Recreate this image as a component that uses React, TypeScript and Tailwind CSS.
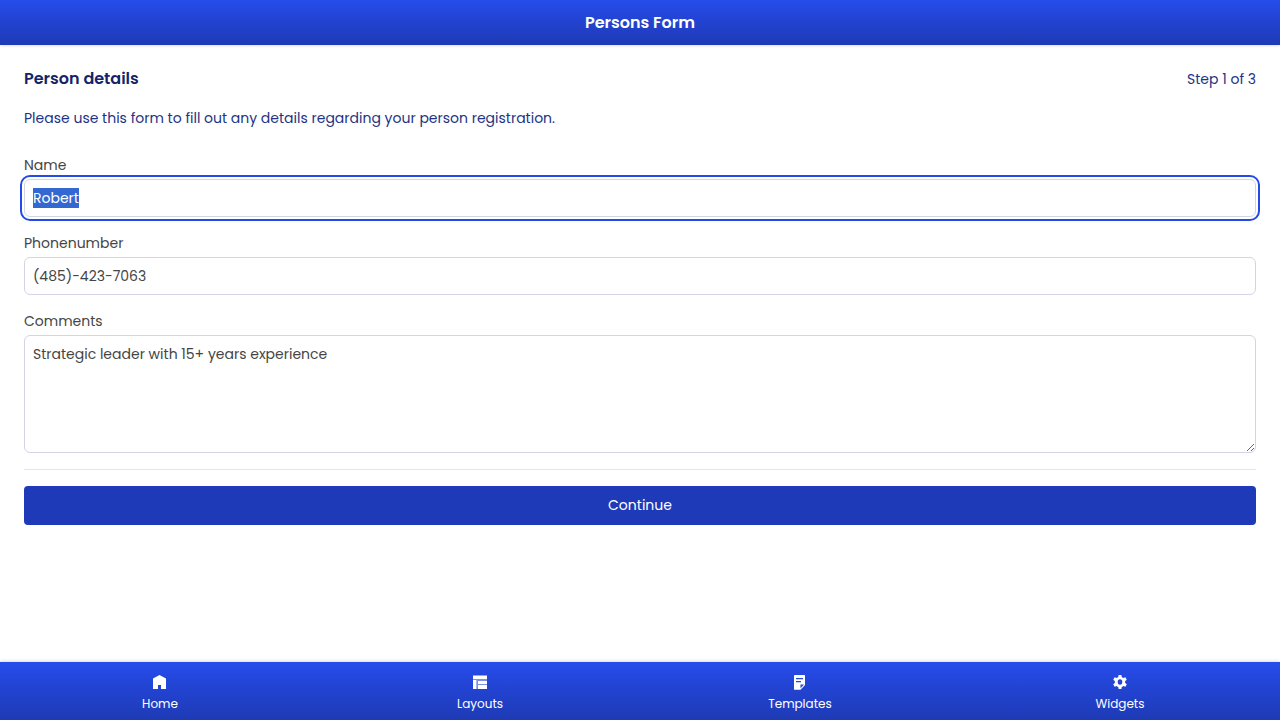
import { useEffect, useRef } from "react";

const tabs = [
  {
    label: "Home",
    icon: <path d="M7.500 1 14 4.500V15H9v-4H6v4H1V4.500Z" />,
  },
  {
    label: "Layouts",
    icon: (
      <>
        <path d="M1 1.500h14v3.500H1zM1 6h3.500v9H1zM6 7h9v3H6zM6 11h9v4H6z" />
        <path d="M1 5h14v1H1zM4.500 6H6v9H4.500zM6 6h9v1H6zM6 10h9v1H6z" fillOpacity="0.400" />
      </>
    ),
  },
  {
    label: "Templates",
    icon: (
      <path
        fillRule="evenodd"
        d="M3 1h9.500q.5 0 .5.500V11l-4.500 4.800H2.500q-.5 0-.5-.500V1.500Q2 1 3 1ZM4 4v1.200h7V4ZM4 7v1.200h5V7ZM8.500 10.500v3.800L12 10.500Z"
      />
    ),
  },
  {
    label: "Widgets",
    icon: (
      <>
        <path
          fillRule="evenodd"
          d="M8 2.800a5.200 5.200 0 1 0 0 10.400A5.200 5.200 0 0 0 8 2.800ZM8 5.300a2.300 2.700 0 1 1 0 5.400 2.300 2.700 0 0 1 0-5.400Z"
        />
        <path id="gear-teeth" d="M6.600 1h2.800l.5 3H6.100ZM6.600 15h2.800l.5-3H6.100Z" />
        <path transform="rotate(60 8 8)" d="M6.600 1h2.800l.5 3H6.100ZM6.600 15h2.800l.5-3H6.100Z" />
        <path transform="rotate(120 8 8)" d="M6.600 1h2.800l.5 3H6.100ZM6.600 15h2.800l.5-3H6.100Z" />
      </>
    ),
  },
];

const field =
  "block w-full rounded-md border border-[#d4d4e6] bg-white px-2 py-2 text-sm leading-5 text-[#454545] outline-offset-2 outline-[#244be5] focus:outline-2";

export default function App() {
  const nameRef = useRef<HTMLInputElement>(null);

  useEffect(() => {
    nameRef.current?.focus();
    nameRef.current?.select();
  }, []);

  return (
    <div className="flex min-h-screen flex-col bg-white font-[Poppins,Inter,sans-serif] text-sm leading-5 text-[#454545]">
      <header className="bg-linear-to-b from-[#264ceb] to-[#1e3ab5] py-2.5 text-center text-white shadow-sm">
        <h1 className="text-base leading-[25px] font-semibold">Persons Form</h1>
      </header>

      <main className="flex-1 p-6">
        <div className="flex items-center justify-between text-[#1e3385]">
          <h2 className="text-base leading-5 font-semibold text-[#152469]">Person details</h2>
          <span>Step 1 of 3</span>
        </div>
        <p className="mt-[19px] text-[#1e3385]">
          Please use this form to fill out any details regarding your person registration.
        </p>
        <form className="mt-[27px]" onSubmit={(e) => e.preventDefault()}>
          <div className="flex flex-col gap-4">
            <div>
              <label htmlFor="name" className="mb-1 block">Name</label>
              <input ref={nameRef} id="name" type="text" defaultValue="Robert" className={field} />
            </div>
            <div>
              <label htmlFor="phone" className="mb-1 block">Phonenumber</label>
              <input id="phone" type="tel" defaultValue="(485)-423-7063" className={field} />
            </div>
            <div>
              <label htmlFor="comments" className="mb-1 block">Comments</label>
              <textarea id="comments" rows={5} defaultValue="Strategic leader with 15+ years experience" className={field} />
            </div>
          </div>
          <hr className="my-4 border-[#e4e4f0]" />
          <button type="submit" className="block w-full rounded bg-[#1e3ab8] py-[9px] leading-[21px] text-white">
            Continue
          </button>
        </form>
      </main>

      <nav className="grid grid-cols-4 bg-linear-to-b from-[#264ceb] to-[#1e3ab5] text-white shadow-[0_-1px_3px_rgba(0,0,0,0.15)]">
        {tabs.map((tab) => (
          <a key={tab.label} href="#" className="flex flex-col items-center gap-[5px] pt-3 pb-[7px] text-xs leading-[18px]">
            <svg viewBox="0 0 16 16" className="size-4" fill="currentColor" aria-hidden="true">
              {tab.icon}
            </svg>
            {tab.label}
          </a>
        ))}
      </nav>
    </div>
  );
}
